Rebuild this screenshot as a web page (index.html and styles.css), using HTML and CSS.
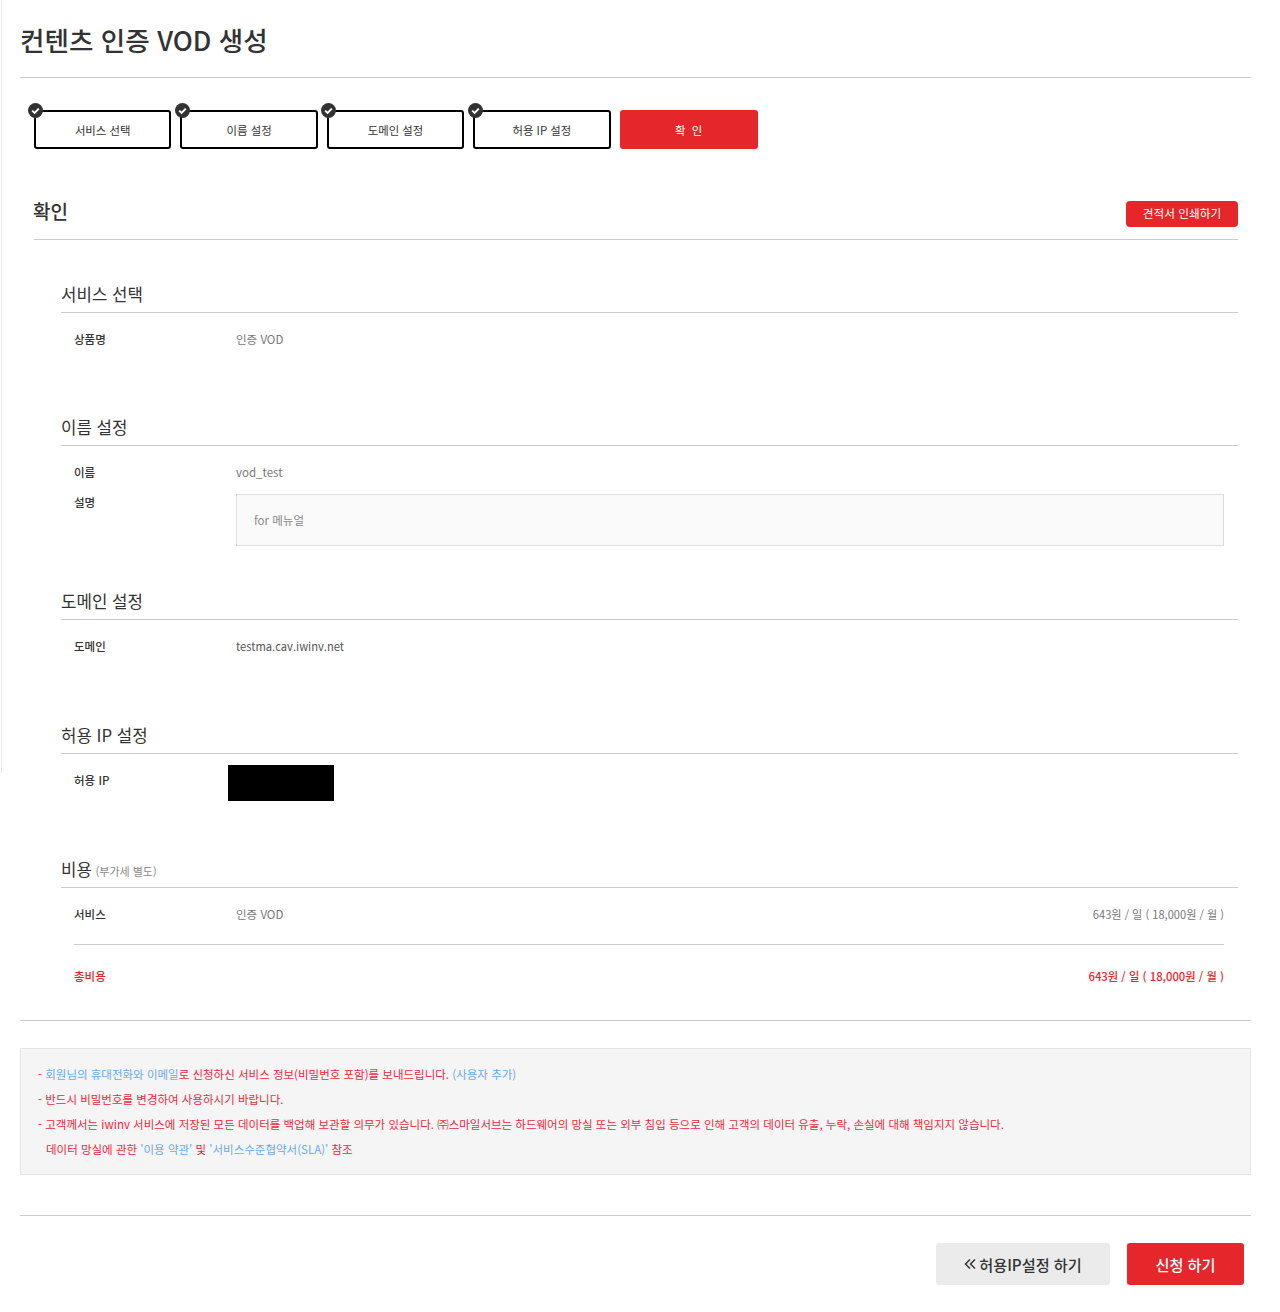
FILE: index.html
```html
<!DOCTYPE html>
<html lang="ko">
<head>
<meta charset="utf-8">
<title>컨텐츠 인증 VOD 생성</title>
<link rel="stylesheet" href="styles.css">
</head>
<body>
<div class="rail"></div>
<main class="page">
  <h1 class="title">컨텐츠 인증 VOD 생성</h1>
  <ol class="steps">
    <li class="step done"><svg class="check" viewBox="0 0 15 15"><circle cx="7.5" cy="7.5" r="7.5" fill="#333"/><path d="M4.2 7.6l2.4 2.3 4.2-4.3" fill="none" stroke="#fff" stroke-width="2"/></svg>서비스 선택</li>
    <li class="step done"><svg class="check" viewBox="0 0 15 15"><circle cx="7.5" cy="7.5" r="7.5" fill="#333"/><path d="M4.2 7.6l2.4 2.3 4.2-4.3" fill="none" stroke="#fff" stroke-width="2"/></svg>이름 설정</li>
    <li class="step done"><svg class="check" viewBox="0 0 15 15"><circle cx="7.5" cy="7.5" r="7.5" fill="#333"/><path d="M4.2 7.6l2.4 2.3 4.2-4.3" fill="none" stroke="#fff" stroke-width="2"/></svg>도메인 설정</li>
    <li class="step done"><svg class="check" viewBox="0 0 15 15"><circle cx="7.5" cy="7.5" r="7.5" fill="#333"/><path d="M4.2 7.6l2.4 2.3 4.2-4.3" fill="none" stroke="#fff" stroke-width="2"/></svg>허용 IP 설정</li>
    <li class="step current">확&nbsp;&nbsp;인</li>
  </ol>

  <section class="confirm">
    <header class="confirm-head">
      <h2 class="confirm-title">확인</h2>
      <a class="print-btn">견적서 인쇄하기</a>
    </header>

    <section class="sub sub-first">
      <h3 class="sub-title">서비스 선택</h3>
      <div class="row"><div class="label">상품명</div><div class="value">인증 VOD</div></div>
    </section>

    <section class="sub sub-desc">
      <h3 class="sub-title">이름 설정</h3>
      <div class="row"><div class="label">이름</div><div class="value">vod_test</div></div>
      <div class="row row-desc"><div class="label">설명</div><div class="desc-box">for 메뉴얼</div></div>
    </section>

    <section class="sub sub-wide">
      <h3 class="sub-title">도메인 설정</h3>
      <div class="row"><div class="label">도메인</div><div class="value dark">testma.cav.iwinv.net</div></div>
    </section>

    <section class="sub sub-wide">
      <h3 class="sub-title">허용 IP 설정</h3>
      <div class="row"><div class="label">허용 IP</div><div class="redact"></div></div>
    </section>

    <section class="sub sub-cost">
      <h3 class="sub-title">비용 <small class="note">(부가세 별도)</small></h3>
      <div class="row cost-row"><div class="label">서비스</div><div class="value">인증 VOD</div><div class="price">643원 / 일 ( 18,000원 / 월 )</div></div>
      <div class="row total-row"><div class="label">총비용</div><div class="price">643원 / 일 ( 18,000원 / 월 )</div></div>
    </section>
  </section>

  <section class="notice">
    <p>- <a class="link">회원님의 휴대전화와 이메일</a>로 신청하신 서비스 정보(비밀번호 포함)를 보내드립니다. <a class="link">(사용자 추가)</a></p>
    <p>- 반드시 비밀번호를 변경하여 사용하시기 바랍니다.</p>
    <p>- 고객께서는 iwinv 서비스에 저장된 모든 데이터를 백업해 보관할 의무가 있습니다. ㈜스마일서브는 하드웨어의 망실 또는 외부 침입 등으로 인해 고객의 데이터 유출, 누락, 손실에 대해 책임지지 않습니다.</p>
    <p class="indent">데이터 망실에 관한 <a class="link">'이용 약관'</a> 및 <a class="link">'서비스수준협약서(SLA)'</a> 참조</p>
  </section>

  <footer class="actions">
    <a class="btn btn-back"><svg class="chev" viewBox="0 0 12 12"><path d="M6 1.5L1.5 6 6 10.5M11 1.5L6.5 6l4.5 4.5" fill="none" stroke="#333" stroke-width="1.5"/></svg>허용IP설정 하기</a>
    <a class="btn btn-apply">신청 하기</a>
  </footer>
</main>
</body>
</html>
```
FILE: styles.css
```css
* { box-sizing: border-box; }
html, body { margin: 0; padding: 0; background: #fff; }
body {
  font-family: "Noto Sans CJK KR", "Noto Sans", sans-serif;
  font-size: 11.5px;
  color: #333;
  height: 1312px;
  position: relative;
  overflow: hidden;
}
.rail { position: absolute; left: 1px; top: 0; width: 1px; height: 773px; background: #e5e5e5; }
.page { margin-left: 20px; width: 1231px; }

.title {
  margin: 0;
  height: 78px;
  padding-top: 20px;
  font-size: 26.6px;
  line-height: 40px;
  font-weight: 500;
  color: #333;
  border-bottom: 1px solid #ccc;
}

.steps {
  list-style: none;
  margin: 32px 0 0;
  padding: 0 0 0 14px;
  display: flex;
  gap: 9px;
}
.step {
  position: relative;
  width: 137.4px;
  height: 39px;
  display: flex;
  align-items: center;
  justify-content: center;
  border-radius: 3px;
  font-size: 11.4px;
  color: #333;
}
.step.done { border: 2px solid #000; }
.step.current { width: 138px; background: #e5262b; color: #fff; }
.check { position: absolute; left: -7.6px; top: -9px; width: 15px; height: 15px; }

.confirm { padding: 0 13px 0 14px; border-bottom: 1px solid #ccc; }
.confirm-head {
  margin-top: 40px;
  height: 51px;
  display: flex;
  justify-content: space-between;
  align-items: flex-start;
  border-bottom: 1px solid #ccc;
}
.confirm-title { margin: 1px 0 0 -1px; font-size: 19px; line-height: 42px; font-weight: 500; color: #333; }
.print-btn {
  margin-top: 12px;
  width: 112px;
  height: 26px;
  border-radius: 4px;
  background: #e5262b;
  color: #fff;
  font-size: 11.7px;
  line-height: 24px;
  text-align: center;
}

.sub { margin-left: 27px; padding-bottom: 61px; }
.sub-first { margin-top: 42px; }
.sub-desc { padding-bottom: 43px; }
.sub-wide { padding-bottom: 62px; }
.sub-cost { padding-bottom: 0; }
.sub-title {
  margin: 0;
  height: 31px;
  font-size: 16.8px;
  line-height: 24px;
  font-weight: 400;
  color: #333;
  border-bottom: 1px solid #ccc;
}
.note { margin-left: -1px; font-size: 11px; color: #888; }

.row { display: flex; padding: 0 14px 0 13px; min-height: 30px; line-height: 30px; }
.sub-title + .row { margin-top: 11px; }
.label { width: 162px; flex: none; font-weight: 500; color: #333; }
.value { color: #777; }
.value.dark { color: #555; font-size: 11.2px; }
.redact { width: 106px; height: 36px; background: #000; margin-left: -8px; margin-bottom: -6px; }
.row-desc .desc-box {
  flex: 1;
  margin-top: 7px;
  height: 52px;
  line-height: 50px;
  padding-left: 17px;
  background: #fafafa;
  border: 1px solid #ddd;
  color: #888;
}
.cost-row { height: 45px; }
.price { font-size: 11.1px; }
.cost-row .price { margin-left: auto; color: #777; }
.total-row { margin: 0 14px 0 13px; padding: 16px 0; height: 76px; border-top: 1px solid #ccc; }
.total-row .label, .total-row .price { color: #e5262b; font-weight: 500; }
.total-row .price { margin-left: auto; font-size: 11.3px; }

.notice {
  margin-top: 27px;
  padding: 13px 17px;
  height: 127px;
  background: #f5f5f5;
  border: 1px solid #e5e5e5;
  color: #f0283c;
  line-height: 25px;
}
.notice p { margin: 0; }
.notice .indent { padding-left: 8px; }
.link { color: #6aa9f0; }

.actions {
  margin-top: 40px;
  padding: 27px 7px 0 0;
  border-top: 1px solid #ccc;
  display: flex;
  justify-content: flex-end;
  gap: 17px;
}
.btn {
  height: 42px;
  border-radius: 3px;
  display: flex;
  align-items: center;
  justify-content: center;
  font-size: 15.2px;
  font-weight: 500;
}
.btn-back { width: 174px; background: #ebebeb; color: #333; }
.chev { width: 12px; height: 12px; margin-right: 3px; }
.btn-apply { width: 117px; background: #e5262b; color: #fff; }
```
